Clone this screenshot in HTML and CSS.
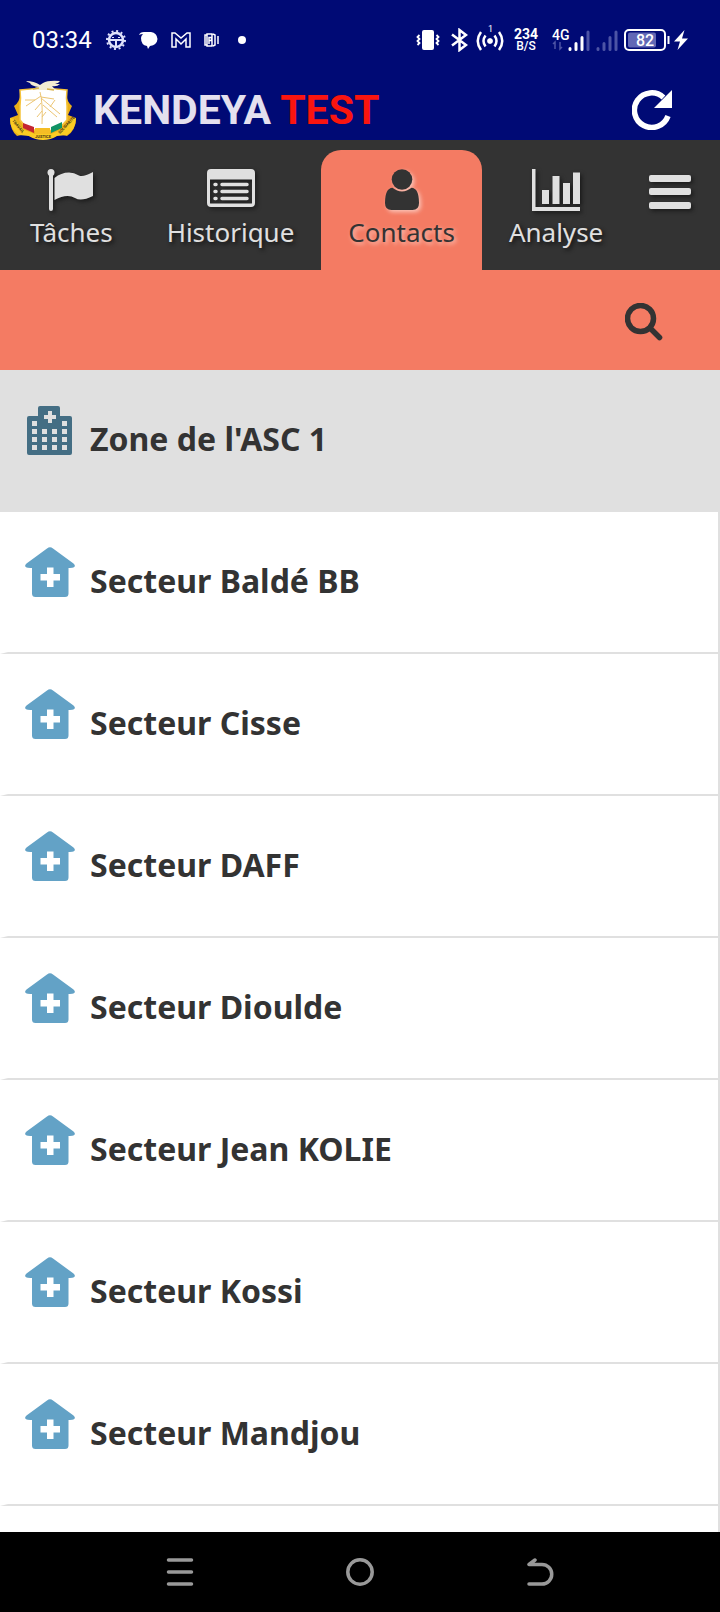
FILE: index.html
```html
<!DOCTYPE html>
<html lang="fr">
<head>
<meta charset="utf-8">
<meta name="viewport" content="width=device-width, initial-scale=1">
<title>Contacts</title>
<link rel="stylesheet" href="styles.css">
</head>
<body>
<svg class="defs" aria-hidden="true">
  <symbol id="house" viewBox="0 0 50 50">
    <path d="M22 1.500Q25-.8 28 1.500L48.500 16.500Q51 18.700 49 20.300Q47.500 21.200 43.500 21V46.500Q43.500 50 40 50H10.500Q7 50 7 46.500V21Q2.500 21.200 1 20.300Q-1 18.700 1.500 16.500Z" fill="#63a2c6"/>
    <path d="M22 20.500h6.500V27H35v6.500h-6.500V40H22v-6.500h-6.500V27H22z" fill="#fff"/>
  </symbol>
</svg>
<div class="status">
  <time class="clock">03:34</time>
  <div class="notices">
    <svg width="20" height="24" viewBox="0 0 20 24" fill="none" stroke="#dfe2fb"><circle cx="10" cy="12" r="7" stroke-width="2.500"/><circle cx="10" cy="12" r="9" stroke-width="2" stroke-dasharray="2 2.700"/><path d="M4 12h12M10 12v7M7 9v1M13 9v1" stroke-width="2"/></svg>
    <svg width="19" height="24" viewBox="0 0 19 24" fill="#fff"><path d="M0 7Q1 4 5 4H12Q18 5 18.500 11Q18 17 11 18L9 21L8 18Q2 17 2 10Q2 8 4 6Q2 6 0 7Z"/></svg>
    <svg width="20" height="24" viewBox="0 0 20 24" fill="none" stroke="#fff" stroke-width="1.500"><path d="M1 19V5h3l6 5 6-5h3v14h-4v-8l-5 5-5-5v8z"/></svg>
    <svg width="15" height="24" viewBox="0 0 15 24" fill="none" stroke="#fff" stroke-width="1.500"><path d="M3 7H1v10h2M3 6h5v12H3zM9 6l2 1v10l-2 1M14 8v8M5 16V9.500h2.500v3H5"/></svg>
    <svg width="8" height="24" viewBox="0 0 8 24" fill="#fff"><circle cx="4" cy="12" r="4"/></svg>
  </div>
  <div class="system">
    <svg width="24" height="24" viewBox="0 0 24 24" fill="none" stroke="#fff" stroke-width="2"><rect x="7" y="3" width="10" height="18" rx="1" fill="#fff"/><path d="M3.500 7 1.500 9l2 2-2 2 2 2-2 2M20.500 7l2 2-2 2 2 2-2 2 2 2" stroke-width="1.800"/></svg>
    <svg class="bluetooth" width="17" height="24" viewBox="0 0 17 24" fill="none" stroke="#fff" stroke-width="2.500"><path d="M1 6.500 15 17l-6.500 5V2L15 7 1 17.500"/></svg>
    <svg class="hotspot" width="28" height="28" viewBox="0 0 28 28" fill="none" stroke="#fff" stroke-width="2.500"><circle cx="14" cy="17" r="2.500" fill="#fff" stroke="none"/><circle cx="14" cy="17" r="1.500"/><path d="M9.500 11.500Q5.500 17 9.500 22.500M18.500 11.500Q22.500 17 18.500 22.500M5 8Q-1.500 17 5 26M23 8Q29.500 17 23 26"/><text x="12" y="8" font-size="9" fill="#fff" stroke="none">1</text></svg>
    <div class="speed"><b>234</b><small>B/S</small></div>
    <svg class="signal" width="38" height="24" viewBox="0 0 38 24"><text x="0" y="12" font-size="14" font-weight="500" fill="#fff">4G</text><path d="M3 21v-7L1 16M8 14v7l2-2" fill="none" stroke="#4d54a5" stroke-width="1.500"/><g stroke-width="3" stroke-linecap="round"><path d="M18 21.500v-1M24 21.500v-6M30 21.500v-12" stroke="#fff"/><path d="M36 21.500V4" stroke="#4d54a5"/></g></svg>
    <svg width="22" height="24" viewBox="0 0 22 24" stroke="#4d54a5" stroke-width="3" stroke-linecap="round"><path d="M2 21.500v-1M8 21.500v-6M14 21.500v-12M20 21.500V4"/></svg>
    <svg width="46" height="24" viewBox="0 0 46 24"><rect x="1" y="2" width="40" height="20" rx="4" fill="none" stroke="#fff" stroke-width="2"/><rect x="4" y="4.500" width="28" height="15" rx="2" fill="#6268b5"/><path d="M44.500 8v8" stroke="#fff" stroke-width="2"/><text x="21" y="17.500" text-anchor="middle" font-size="16" font-weight="500" fill="#fff">82</text></svg>
    <svg class="bolt" width="14" height="24" viewBox="0 0 14 24" fill="#fff"><path d="M10.500 2 0 13.500h6L3.500 22 14 10.500H8z"/></svg>
  </div>
</div>
<header class="appbar">
  <svg width="68" height="60" viewBox="0 0 68 60">
    <path d="M11 14h46q1 8 6 12l-4 9 8 3q0 12-9 18l-8-2q-6 5-16 5t-18-5l-8 2Q1 50 1 38l8-3-4-9q6-4 6-12z" fill="#e9af19"/>
    <path d="M11 10q23-3 47 0-1 7 0 16v14Q51 50 34 52 17 50 11 40V26q1-9 0-16z" fill="#fff" stroke="#f5c33b" stroke-width="1.500"/>
    <path d="m14 43 11 4v6l-11-5z" fill="#c52631"/><path d="M26 48h15v6H26z" fill="#f5bd25"/><path d="m42 47 11-5v6l-11 5z" fill="#119365"/>
    <path d="m1 38 5 1 7 10 13 5h16l12-5 8-10 5-1q0 11-9 17l-10 1q-6 4-14 4t-14-4l-10-1Q1 50 1 38z" fill="#fbcc24"/>
    <path d="M31 12q3 10 2 32M32 16 17 26M32 18l19 16M32 17l13 2M34 25l14 12M32 23l-6 7M33 31l-5 6M33 37l4-5M41 27l5-7M26 20l-10 0" fill="none" stroke="#ecc573" stroke-width="1"/>
    <path d="M17 1q8 0 14 4l3-2q5-3 17-2-1 2-5 3h5q-3 3-8 2 2 3 5 4H25q0-3 5-3-8-1-9-4-3-1-4-2z" fill="#f3ecd3"/>
    <path d="m24 9 6-1M38 9l7 1" stroke="#d7b24a" stroke-width="1.500"/>
    <g font-size="4" font-weight="700" fill="#453512"><text x="34" y="58" text-anchor="middle">JUSTICE</text><text transform="translate(3 41) rotate(50)">TRAVAIL</text><text transform="translate(51 54) rotate(-47)">SOLIDARITE</text></g>
  </svg>
  <h1 class="brand">KENDEYA <span class="brand-test">TEST</span></h1>
  <button class="plain refresh" aria-label="Actualiser">
    <svg width="40" height="40" viewBox="0 0 40 40"><path d="M31.500 7.500A17.300 17.300 0 1 0 36 26" fill="none" stroke="#fff" stroke-width="5.500"/><path d="M40 0v18H22z" fill="#fff"/></svg>
  </button>
</header>
<nav class="tabs">
  <a class="tab" href="#taches"><svg width="48" height="42" viewBox="0 0 48 42" fill="currentColor"><circle cx="4" cy="3.500" r="3.500"/><path d="M2 4h4v36q0 2-2 2t-2-2zM7.500 9Q14 3.500 22 3.500q5 0 10 3 4 2 14-3.500v24q-12 6-18 2-8-5-20.500 2z"/></svg>Tâches</a>
  <a class="tab" href="#historique"><svg width="48" height="42" viewBox="0 0 48 42" fill="currentColor"><path fill-rule="evenodd" d="M4 0h40q4 0 4 4v30q0 4-4 4H4q-4 0-4-4V4q0-4 4-4zm-1 10.500v23.500q0 .5.500.5h41q.5 0 .5-.5V10.500z"/><path d="M8 15.500h1M8 22.500h1M8 29.500h1M15 15.500h25M15 22.500h25M15 29.500h25" stroke="currentColor" stroke-width="3.500" stroke-linecap="round"/></svg>Historique</a>
  <a class="tab tab-active" href="#contacts" aria-current="page"><svg width="48" height="42" viewBox="0 0 48 42" fill="currentColor"><circle cx="24" cy="10.500" r="10.300"/><path d="M14.500 18.800Q19 22.500 24 22.500t9.500-3.700q7.500.5 7.500 15.200 0 7-6.500 7h-21Q7 41 7 34q0-14.700 7.500-15.200z"/></svg>Contacts</a>
  <a class="tab" href="#analyse"><svg width="48" height="42" viewBox="0 0 48 42" fill="currentColor"><path d="M0 0h3.500v38H48v4H0zM10 21h7v14h-7zM20.500 7h7v28h-7zM31 14h7v21h-7zM41 3.500h7V35h-7z"/></svg>Analyse</a>
  <button class="plain menu" aria-label="Menu"><svg width="42" height="36" viewBox="0 0 42 36" fill="currentColor"><rect width="42" height="7" y="1" rx="2"/><rect width="42" height="7" y="14" rx="2"/><rect width="42" height="7" y="28" rx="2"/></svg></button>
</nav>
<div class="searchbar">
  <button class="plain" aria-label="Rechercher"><svg width="38" height="38" viewBox="0 0 38 38" fill="none" stroke="#333"><circle cx="15.500" cy="15.500" r="13" stroke-width="5.500"/><path d="m25 25 9.500 9.500" stroke-width="5.500" stroke-linecap="round"/></svg></button>
</div>
<main class="list">
  <a class="row row-zone" href="#zone"><svg width="50" height="50" viewBox="0 -1 50 50" fill="#446e84"><path d="M15 0h18q2 0 2 2v8h10q2 0 2 2v35q0 2-2 2H4q-2 0-2-2V12q0-2 2-2h9V2q0-2 2-2z"/><path d="M23 5h4v4h4v4h-4v4h-4v-4h-4V9h4z" fill="#e0e0e0"/><path d="M7 17.500h5M37 17.500h5M7 25.500h35M7 33.500h35M7 41.500h35" stroke="#e0e0e0" stroke-width="5" stroke-dasharray="5 5"/></svg><span class="name">Zone de l'ASC 1</span></a>
  <a class="row" href="#1"><svg width="50" height="50"><use href="#house"/></svg><span class="name">Secteur Baldé BB</span></a>
  <a class="row" href="#2"><svg width="50" height="50"><use href="#house"/></svg><span class="name">Secteur Cisse</span></a>
  <a class="row" href="#3"><svg width="50" height="50"><use href="#house"/></svg><span class="name">Secteur DAFF</span></a>
  <a class="row" href="#4"><svg width="50" height="50"><use href="#house"/></svg><span class="name">Secteur Dioulde</span></a>
  <a class="row" href="#5"><svg width="50" height="50"><use href="#house"/></svg><span class="name">Secteur Jean KOLIE</span></a>
  <a class="row" href="#6"><svg width="50" height="50"><use href="#house"/></svg><span class="name">Secteur Kossi</span></a>
  <a class="row" href="#7"><svg width="50" height="50"><use href="#house"/></svg><span class="name">Secteur Mandjou</span></a>
</main>
<footer class="system-nav">
  <button class="plain" aria-label="Applications récentes"><svg width="28" height="28" viewBox="0 0 28 28" stroke="#999" stroke-width="3.500" stroke-linecap="round"><path d="M2.500 2h23M2.500 14h23M2.500 26h23"/></svg></button>
  <button class="plain" aria-label="Accueil"><svg width="28" height="28" viewBox="0 0 28 28" fill="none" stroke="#999" stroke-width="3.500"><circle cx="14" cy="14" r="12.200"/></svg></button>
  <button class="plain" aria-label="Retour"><svg width="28" height="28" viewBox="0 0 28 28" fill="none" stroke="#999" stroke-width="3.500" stroke-linecap="round" stroke-linejoin="round"><path d="M9 2 3 6.500H16a9.700 9.700 0 0 1 0 19.500H3"/></svg></button>
</footer>
</body>
</html>
```
FILE: styles.css
```css
* { box-sizing: border-box; }

body {
  margin: 0;
  height: 100vh;
  display: flex;
  flex-direction: column;
  font-family: "Noto Sans", sans-serif;
  color: #333;
  background: #fff;
}

svg { display: block; flex: none; }
a { text-decoration: none; color: inherit; }

.defs { width: 0; height: 0; position: absolute; }

.plain {
  padding: 0;
  border: 0;
  background: none;
  color: inherit;
  display: flex;
  align-items: center;
  justify-content: center;
}

.status {
  flex: none;
  height: 80px;
  padding: 0 32px;
  display: flex;
  align-items: center;
  background: #000a75;
  color: #fff;
  font-family: Roboto, sans-serif;
}

.clock { font-size: 24px; line-height: 28px; margin-right: 14px; }
.notices { display: flex; align-items: center; gap: 13px; }
.notices svg:last-child { margin-left: 6px; }
.system { display: flex; align-items: center; gap: 6px; margin-left: auto; }
.bluetooth { margin-left: 5px; }
.hotspot { margin: 0 4px 4px 2px; }
.speed {
  display: flex;
  flex-direction: column;
  align-items: center;
  font-size: 14px;
  line-height: 13px;
}
.speed small { font-size: 12px; line-height: 11px; font-weight: 500; }
.signal { margin-left: 8px; }
.bolt { margin-left: -2px; }

.appbar {
  flex: none;
  height: 60px;
  padding: 0 48px 0 9px;
  display: flex;
  align-items: center;
  background: #000a75;
  font-family: Roboto, sans-serif;
}
.brand {
  margin: 0 0 0 16px;
  font-size: 41px;
  line-height: 60px;
  font-weight: 700;
  color: #e4e0ef;
}
.brand-test { color: #fa150f; }
.refresh { margin-left: auto; }

.tabs {
  flex: none;
  padding: 10px 29px 0 3px;
  display: flex;
  align-items: flex-start;
  background: #333;
  color: #e0e0e0;
}
.tab {
  height: 120px;
  padding: 19px 27px 0;
  display: flex;
  flex-direction: column;
  align-items: center;
  gap: 5px;
  font-size: 26px;
  line-height: 32px;
  text-shadow: 2px 2px 4px #111;
}
.tab svg, .menu svg { filter: drop-shadow(2px 2px 2px #1a1a1a); }
.tab-active {
  border-radius: 20px 20px 0 0;
  background: #f47b63;
  color: #333;
  text-shadow: 2px 2px 4px #fbc5b9;
}
.tab-active svg { filter: drop-shadow(2px 2px 2px #fbc5b9); }
.menu { margin: 24px 0 0 auto; }

.searchbar {
  flex: none;
  height: 100px;
  padding: 4px 57px 0;
  display: flex;
  align-items: center;
  justify-content: flex-end;
  background: #f47b63;
}

.list {
  flex: 1;
  min-height: 0;
  overflow: hidden;
  border-right: 2px solid #e0e0e0;
}
.row {
  height: 142px;
  padding: 35px 16px 0 17px;
  display: flex;
  align-items: flex-start;
  gap: 15px;
  border-left: 8px solid #fff;
  border-bottom: 2px solid #e0e0e0;
}
.row-zone { background: #e0e0e0; border-color: #e0e0e0; }
.name { font-size: 32px; line-height: 68px; font-weight: 700; }

.system-nav {
  flex: none;
  height: 80px;
  display: flex;
  align-items: center;
  justify-content: space-evenly;
  padding: 0 14px;
  background: #000;
}
```
